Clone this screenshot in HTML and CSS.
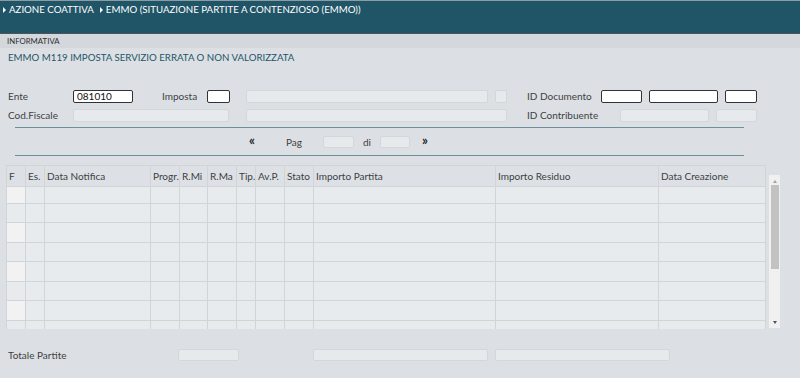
FILE: index.html
```html
<!DOCTYPE html>
<html lang="it">
<head>
<meta charset="utf-8">
<title>EMMO</title>
<link rel="stylesheet" href="styles.css">
</head>
<body>
<header class="topbar">
  <nav class="crumbs">
    <span class="crumb"><span class="tri"></span>AZIONE COATTIVA</span>
    <span class="crumb"><span class="tri"></span>EMMO (SITUAZIONE PARTITE A CONTENZIOSO (EMMO))</span>
  </nav>
</header>
<div class="tabbar"><span class="tab">INFORMATIVA</span></div>
<main class="content">
  <h1 class="title">EMMO M119 IMPOSTA SERVIZIO ERRATA O NON VALORIZZATA</h1>

  <div class="form">
    <div class="frow">
      <label class="lbl w65">Ente</label>
      <span class="inp on w60">081010</span>
      <label class="lbl w45 ml29">Imposta</label>
      <span class="inp on w23"></span>
      <span class="inp off w242 ml16"></span>
      <span class="inp off w12 ml7"></span>
      <label class="lbl w74 ml20">ID Documento</label>
      <span class="inp on w41"></span>
      <span class="inp on w69 ml7"></span>
      <span class="inp on w32 ml7"></span>
    </div>
    <div class="frow r2">
      <label class="lbl w65">Cod.Fiscale</label>
      <span class="inp off w156"></span>
      <span class="inp off w261 ml17"></span>
      <label class="lbl w93 ml20">ID Contribuente</label>
      <span class="inp off w89"></span>
      <span class="inp off w41 ml7"></span>
    </div>
  </div>

  <div class="pager">
    <span class="arrow">&laquo;</span>
    <span class="plbl pag">Pag</span>
    <span class="inp off w31"></span>
    <span class="plbl di">di</span>
    <span class="inp off w30"></span>
    <span class="arrow next">&raquo;</span>
  </div>

  <div class="gridwrap">
    <table class="grid">
      <colgroup>
        <col style="width:19px"><col style="width:19px"><col style="width:106px"><col style="width:29px"><col style="width:28px"><col style="width:29px"><col style="width:19px"><col style="width:29px"><col style="width:29px"><col style="width:182px"><col style="width:163px"><col style="width:107px">
      </colgroup>
      <thead>
        <tr><th>F</th><th>Es.</th><th>Data Notifica</th><th>Progr.</th><th>R.Mi</th><th>R.Ma</th><th>Tip.</th><th>Av.P.</th><th>Stato</th><th>Importo Partita</th><th>Importo Residuo</th><th>Data Creazione</th></tr>
      </thead>
      <tbody>
        <tr class="odd first"><td></td><td></td><td></td><td></td><td></td><td></td><td></td><td></td><td></td><td></td><td></td><td></td></tr>
        <tr><td></td><td></td><td></td><td></td><td></td><td></td><td></td><td></td><td></td><td></td><td></td><td></td></tr>
        <tr class="odd"><td></td><td></td><td></td><td></td><td></td><td></td><td></td><td></td><td></td><td></td><td></td><td></td></tr>
        <tr><td></td><td></td><td></td><td></td><td></td><td></td><td></td><td></td><td></td><td></td><td></td><td></td></tr>
        <tr class="odd"><td></td><td></td><td></td><td></td><td></td><td></td><td></td><td></td><td></td><td></td><td></td><td></td></tr>
        <tr><td></td><td></td><td></td><td></td><td></td><td></td><td></td><td></td><td></td><td></td><td></td><td></td></tr>
        <tr class="odd"><td></td><td></td><td></td><td></td><td></td><td></td><td></td><td></td><td></td><td></td><td></td><td></td></tr>
        <tr class="last"><td></td><td></td><td></td><td></td><td></td><td></td><td></td><td></td><td></td><td></td><td></td><td></td></tr>
      </tbody>
    </table>
    <div class="scroll">
      <span class="sarrow up"></span>
      <span class="thumb"></span>
      <span class="sarrow down"></span>
    </div>
  </div>

  <div class="totals">
    <label class="lbl w170">Totale Partite</label>
    <span class="inp off w61"></span>
    <span class="inp off w175 ml74"></span>
    <span class="inp off w175 ml7"></span>
  </div>
</main>
</body>
</html>
```

FILE: styles.css
```css
* { box-sizing: border-box; }
html, body { margin: 0; padding: 0; }
body {
  width: 800px;
  height: 378px;
  overflow: hidden;
  background: #dce0e4;
  font-family: Lato, "Open Sans", sans-serif;
  color: #3c3f42;
  font-size: 10px;
}
.topbar {
  height: 34px;
  background: #1f5567;
  border-top: 1px solid #8c9ca2;
  border-bottom: 1px solid #4d5558;
}
.crumbs {
  display: flex;
  padding: 2px 0 0 3px;
  color: #ffffff;
  font-size: 9.7px;
  line-height: 13px;
}
.crumb { display: flex; align-items: center; margin-right: 6px; }
.tri {
  display: inline-block;
  width: 0; height: 0;
  border-top: 3px solid transparent;
  border-bottom: 3px solid transparent;
  border-left: 3px solid #ffffff;
  margin-right: 3px;
}
.tabbar {
  height: 14px;
  background: #d4d8dc;
  padding-left: 7px;
}
.tab {
  display: inline-block;
  font-size: 7.8px;
  line-height: 14px;
  color: #2c2f31;
}
.content { padding: 0; }
.title {
  margin: 4px 0 0 8px;
  font-size: 9.7px;
  line-height: 11px;
  font-weight: normal;
  color: #1f5567;
}
.form { margin-top: 26px; padding-left: 8px; }
.frow { display: flex; align-items: center; height: 14px; }
.frow.r2 { margin-top: 5px; }
.lbl { font-size: 10px; color: #3c3f42; white-space: nowrap; }
.inp {
  display: inline-block;
  height: 13px;
  border-radius: 2px;
  font-size: 10px;
  line-height: 11px;
  padding-left: 3px;
  color: #111;
}
.inp.on { background: #ffffff; border: 1px solid #2f3336; }
.inp.off { background: #e7eaed; border: 1px solid #d3d7da; }
.w12 { width: 12px; } .w23 { width: 23px; } .w30 { width: 30px; } .w31 { width: 31px; } .w32 { width: 32px; }
.w41 { width: 41px; } .w45 { width: 45px; } .w60 { width: 60px; } .w61 { width: 61px; } .w65 { width: 65px; }
.w69 { width: 69px; } .w74 { width: 74px; } .w89 { width: 89px; } .w93 { width: 93px; } .w156 { width: 156px; }
.w170 { width: 170px; } .w175 { width: 175px; } .w242 { width: 242px; } .w261 { width: 261px; }
.ml7 { margin-left: 7px; } .ml16 { margin-left: 16px; } .ml17 { margin-left: 17px; } .ml20 { margin-left: 20px; }
.ml29 { margin-left: 29px; } .ml74 { margin-left: 74px; }

.pager {
  margin: 5px 0 0 15px;
  width: 729px;
  height: 29px;
  border-top: 1px solid #6f8f9b;
  border-bottom: 1px solid #6f8f9b;
  display: flex;
  align-items: center;
  padding-left: 234px;
}
.arrow { font-size: 13px; font-weight: bold; color: #222; line-height: 10px; margin-top: -4px; }
.plbl { font-size: 10px; color: #3c3f42; }
.pag { margin-left: 31px; margin-right: 21px; }
.di { margin-left: 9px; margin-right: 9px; }
.next { margin-left: 12px; }
.inp.w31, .inp.w30 { height: 12px; }

.gridwrap { display: flex; margin: 9px 0 0 6px; }
.grid {
  table-layout: fixed;
  border-collapse: collapse;
  width: 759px;
  background: #e8ebee;
}
.grid th, .grid td { border: 1px solid #d2d5d8; padding: 0; }
.grid thead tr { height: 21px; background: #dde1e5; }
.grid th {
  font-weight: normal;
  font-size: 10px;
  text-align: left;
  padding-left: 2px;
  color: #3c3f42;
  white-space: nowrap;
  overflow: hidden;
}
.grid tbody tr { height: 19.5px; }
.grid tbody tr.first { height: 16.5px; }
.grid tbody tr.last { height: 9px; }
.grid tbody tr.last td { border-bottom: none; }
.grid tr.odd td:first-child { background: #f2f2f3; }
.scroll {
  width: 11px;
  height: 153px;
  margin: 10px 0 0 3px;
  background: #f0f0f1;
  display: flex;
  flex-direction: column;
  align-items: center;
  padding: 3px 0 1px;
}
.thumb { width: 8px; height: 84px; background: #c2c2c2; margin-top: 2px; }
.sarrow { width: 0; height: 0; border-left: 2.5px solid transparent; border-right: 2.5px solid transparent; }
.sarrow.up { border-bottom: 3px solid #a3a3a3; margin-top: 2px; }
.sarrow.down { border-top: 3px solid #505050; margin-top: auto; margin-bottom: 3px; }

.totals { display: flex; align-items: center; margin: 20px 0 0 8px; height: 12px; }
.totals .inp { height: 12px; }
```
